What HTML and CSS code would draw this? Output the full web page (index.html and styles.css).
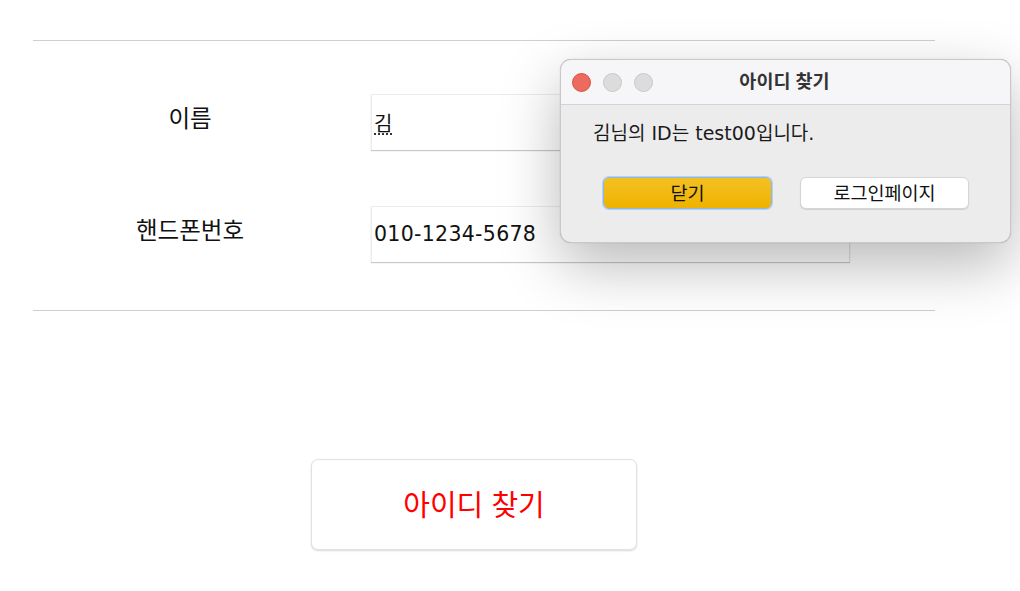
FILE: index.html
```html
<!DOCTYPE html>
<html lang="ko">
<head>
<meta charset="utf-8">
<title>아이디 찾기</title>
<link rel="stylesheet" href="styles.css">
</head>
<body>
<main class="page">
  <section class="form">
    <div class="row">
      <div class="label">이름</div>
      <div class="field"><span class="composing">김</span></div>
    </div>
    <div class="row">
      <div class="label">핸드폰번호</div>
      <div class="field field-phone">010-1234-5678</div>
    </div>
  </section>
  <div class="actions">
    <button class="find-btn">아이디 찾기</button>
  </div>
</main>

<div class="dialog">
  <div class="titlebar">
    <div class="lights">
      <span class="light red"></span>
      <span class="light"></span>
      <span class="light"></span>
    </div>
    <div class="title">아이디 찾기</div>
  </div>
  <div class="dialog-body">
    <p class="message">김님의 ID는 test00입니다.</p>
    <div class="dialog-buttons">
      <button class="dbtn primary">닫기</button>
      <button class="dbtn">로그인페이지</button>
    </div>
  </div>
</div>
</body>
</html>
```

FILE: styles.css
```css
html, body {
  margin: 0;
  padding: 0;
  background: #ffffff;
}
body {
  font-family: "Noto Sans CJK KR", "Noto Sans", sans-serif;
  color: #111;
  width: 1020px;
  height: 591px;
  overflow: hidden;
  position: relative;
}
.page {
  padding-top: 40px;
}
.form {
  margin-left: 33px;
  width: 902px;
  border-top: 1px solid #cfcfcf;
  border-bottom: 1px solid #cfcfcf;
  padding: 52px 0 48px;
  display: flex;
  flex-direction: column;
  gap: 55px;
}
.row {
  display: flex;
  align-items: center;
  height: 57px;
}
.label {
  width: 314px;
  text-align: center;
  font-size: 23.5px;
  margin-right: 24px;
  position: relative;
  top: -5px;
}
.field {
  width: 479px;
  height: 56px;
  box-sizing: border-box;
  background: #fff;
  border-top: 1px solid #ececec;
  border-left: 1px solid #ececec;
  border-right: 1px solid #e4e4e4;
  box-shadow: 0 1px 1px rgba(0,0,0,0.22);
  display: flex;
  align-items: center;
  padding-left: 2px;
  font-family: "DejaVu Sans", "Noto Sans CJK KR", sans-serif;
  font-size: 20.5px;
  color: #111;
}
.composing {
  font-family: "Noto Sans CJK KR", sans-serif;
  font-size: 20px;
  text-decoration: underline dotted #333;
  text-underline-offset: 3px;
}
.field-phone {
  padding-left: 2px;
  letter-spacing: 0.3px;
}
.actions {
  margin-top: 148px;
  padding-left: 311px;
}
.find-btn {
  width: 326px;
  height: 91px;
  background: #fff;
  border: 1px solid #e2e2e2;
  border-radius: 7px;
  box-shadow: 0 1px 2px rgba(0,0,0,0.15);
  color: #ff0000;
  font-family: "Noto Sans CJK KR", sans-serif;
  font-size: 29px;
  padding: 0 0 4px;
}

/* dialog overlay */
.dialog {
  position: absolute;
  left: 560px;
  top: 59px;
  width: 451px;
  height: 184px;
  box-sizing: border-box;
  border: 1px solid #c9c9c9;
  border-radius: 11px;
  background: #ececec;
  overflow: hidden;
  box-shadow: 0 22px 60px rgba(0,0,0,0.28), 0 0 1px rgba(0,0,0,0.3);
}
.titlebar {
  height: 44px;
  background: #f6f6f8;
  border-bottom: 1px solid #d3d3d3;
  display: flex;
  align-items: center;
  position: relative;
}
.lights {
  display: flex;
  gap: 12px;
  padding-left: 11px;
}
.light {
  width: 19px;
  height: 19px;
  box-sizing: border-box;
  border-radius: 50%;
  background: #dcdcdc;
  border: 1px solid #c8c8c8;
}
.light.red {
  background: #ec6a5e;
  border-color: #d5533f;
}
.title {
  position: absolute;
  left: 0;
  right: 0;
  text-align: center;
  font-size: 18.5px;
  font-weight: 700;
  color: #333;
  padding-right: 2px;
  top: 7px;
}
.dialog-body {
  padding: 13px 0 0 32px;
}
.message {
  margin: 0;
  color: #1a1a1a;
  font-family: "DejaVu Sans", "Noto Sans CJK KR", sans-serif;
  font-size: 19px;
}
.dialog-buttons {
  display: flex;
  gap: 28px;
  margin-top: 32px;
  padding-left: 10px;
}
.dbtn {
  width: 169px;
  height: 32px;
  border-radius: 6px;
  border: 1px solid #d5d5d5;
  background: #ffffff;
  box-shadow: 0 1px 1px rgba(0,0,0,0.12);
  font-family: "Noto Sans CJK KR", sans-serif;
  font-size: 18.5px;
  color: #111;
  padding: 0 0 2px;
}
.dbtn.primary {
  background: linear-gradient(#f4c123, #efb200);
  border: 1px solid #8fb7e6;
  box-shadow: 0 0 0 1px #b5d2f2;
}
```
